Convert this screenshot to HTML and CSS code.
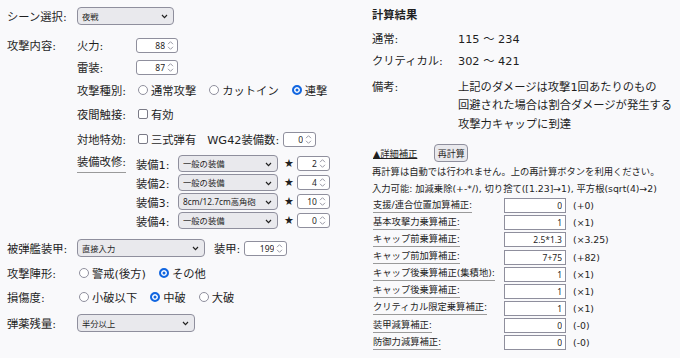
FILE: index.html
```html
<!DOCTYPE html>
<html lang="ja">
<head>
<meta charset="utf-8">
<title>ダメージ計算</title>
<link rel="stylesheet" href="styles.css">
</head>
<body>
<div class="page">
  <div class="left">
    <div class="row row-scene">
      <span class="lbl">シーン選択:</span>
      <span class="sel sel-scene"><select><option>夜戦</option></select><svg class="chev" width="7" height="5" viewBox="0 0 7 5"><path d="M1 1 L3.5 3.6 L6 1" fill="none" stroke="#222" stroke-width="1.2"/></svg></span>
    </div>

    <div class="group g-attack">
      <span class="lbl lbl-top">攻撃内容:</span>
      <div class="subs">
        <div class="srow h22">
          <span class="slbl">火力:</span>
          <span class="num n42"><input value="88"><svg class="spin" width="9" height="13" viewBox="0 0 9 13"><path d="M2 5.2 L4.5 2.7 L7 5.2 M2 7.8 L4.5 10.3 L7 7.8" fill="none" stroke="#9a9aa6" stroke-width="1"/></svg></span>
        </div>
        <div class="srow h22">
          <span class="slbl">雷装:</span>
          <span class="num n42"><input value="87"><svg class="spin" width="9" height="13" viewBox="0 0 9 13"><path d="M2 5.2 L4.5 2.7 L7 5.2 M2 7.8 L4.5 10.3 L7 7.8" fill="none" stroke="#9a9aa6" stroke-width="1"/></svg></span>
        </div>
        <div class="srow h24">
          <span class="slbl">攻撃種別:</span>
          <label class="opt"><input type="radio" name="kind">通常攻撃</label>
          <label class="opt"><input type="radio" name="kind">カットイン</label>
          <label class="opt"><input type="radio" name="kind" checked>連撃</label>
        </div>
        <div class="srow h24">
          <span class="slbl">夜間触接:</span>
          <label class="opt"><input type="checkbox">有効</label>
        </div>
        <div class="srow h26">
          <span class="slbl">対地特効:</span>
          <label class="opt"><input type="checkbox">三式弾有</label>
          <span class="wg">WG42装備数:</span>
          <span class="num n33"><input value="0"><svg class="spin" width="9" height="13" viewBox="0 0 9 13"><path d="M2 5.2 L4.5 2.7 L7 5.2 M2 7.8 L4.5 10.3 L7 7.8" fill="none" stroke="#9a9aa6" stroke-width="1"/></svg></span>
        </div>
        <div class="eq">
          <span class="slbl lbl-eq"><span class="ul">装備改修:</span></span>
          <div class="eqrows">
            <div class="erow">
              <span class="elbl">装備1:</span>
              <span class="sel sel-eq"><select><option>一般の装備</option></select><svg class="chev" width="7" height="5" viewBox="0 0 7 5"><path d="M1 1 L3.5 3.6 L6 1" fill="none" stroke="#222" stroke-width="1.2"/></svg></span>
              <span class="star">★</span>
              <span class="num n33"><input value="2"><svg class="spin" width="9" height="13" viewBox="0 0 9 13"><path d="M2 5.2 L4.5 2.7 L7 5.2 M2 7.8 L4.5 10.3 L7 7.8" fill="none" stroke="#9a9aa6" stroke-width="1"/></svg></span>
            </div>
            <div class="erow">
              <span class="elbl">装備2:</span>
              <span class="sel sel-eq"><select><option>一般の装備</option></select><svg class="chev" width="7" height="5" viewBox="0 0 7 5"><path d="M1 1 L3.5 3.6 L6 1" fill="none" stroke="#222" stroke-width="1.2"/></svg></span>
              <span class="star">★</span>
              <span class="num n33"><input value="4"><svg class="spin" width="9" height="13" viewBox="0 0 9 13"><path d="M2 5.2 L4.5 2.7 L7 5.2 M2 7.8 L4.5 10.3 L7 7.8" fill="none" stroke="#9a9aa6" stroke-width="1"/></svg></span>
            </div>
            <div class="erow">
              <span class="elbl">装備3:</span>
              <span class="sel sel-eq"><select><option>8cm/12.7cm高角砲</option></select><svg class="chev" width="7" height="5" viewBox="0 0 7 5"><path d="M1 1 L3.5 3.6 L6 1" fill="none" stroke="#222" stroke-width="1.2"/></svg></span>
              <span class="star">★</span>
              <span class="num n33"><input value="10"><svg class="spin" width="9" height="13" viewBox="0 0 9 13"><path d="M2 5.2 L4.5 2.7 L7 5.2 M2 7.8 L4.5 10.3 L7 7.8" fill="none" stroke="#9a9aa6" stroke-width="1"/></svg></span>
            </div>
            <div class="erow">
              <span class="elbl">装備4:</span>
              <span class="sel sel-eq"><select><option>一般の装備</option></select><svg class="chev" width="7" height="5" viewBox="0 0 7 5"><path d="M1 1 L3.5 3.6 L6 1" fill="none" stroke="#222" stroke-width="1.2"/></svg></span>
              <span class="star">★</span>
              <span class="num n33"><input value="0"><svg class="spin" width="9" height="13" viewBox="0 0 9 13"><path d="M2 5.2 L4.5 2.7 L7 5.2 M2 7.8 L4.5 10.3 L7 7.8" fill="none" stroke="#9a9aa6" stroke-width="1"/></svg></span>
            </div>
          </div>
        </div>
      </div>
    </div>

    <div class="row row-armor">
      <span class="lbl">被弾艦装甲:</span>
      <span class="sel sel-armor"><select><option>直接入力</option></select><svg class="chev" width="7" height="5" viewBox="0 0 7 5"><path d="M1 1 L3.5 3.6 L6 1" fill="none" stroke="#222" stroke-width="1.2"/></svg></span>
      <span class="armor-lbl">装甲:</span>
      <span class="num n43"><input value="199"><svg class="spin" width="9" height="13" viewBox="0 0 9 13"><path d="M2 5.2 L4.5 2.7 L7 5.2 M2 7.8 L4.5 10.3 L7 7.8" fill="none" stroke="#9a9aa6" stroke-width="1"/></svg></span>
    </div>
    <div class="row row-form">
      <span class="lbl">攻撃陣形:</span>
      <label class="opt"><input type="radio" name="form">警戒(後方)</label>
      <label class="opt"><input type="radio" name="form" checked>その他</label>
    </div>
    <div class="row">
      <span class="lbl">損傷度:</span>
      <label class="opt"><input type="radio" name="dmg">小破以下</label>
      <label class="opt"><input type="radio" name="dmg" checked>中破</label>
      <label class="opt"><input type="radio" name="dmg">大破</label>
    </div>
    <div class="row row-ammo">
      <span class="lbl">弾薬残量:</span>
      <span class="sel sel-ammo"><select><option>半分以上</option></select><svg class="chev" width="7" height="5" viewBox="0 0 7 5"><path d="M1 1 L3.5 3.6 L6 1" fill="none" stroke="#222" stroke-width="1.2"/></svg></span>
    </div>
  </div>

  <div class="right">
    <div class="title">計算結果</div>
    <div class="res res1"><span class="k">通常:</span><span>115 ～ 234</span></div>
    <div class="res res2"><span class="k">クリティカル:</span><span>302 ～ 421</span></div>
    <div class="res res3"><span class="k">備考:</span><span>上記のダメージは攻撃1回あたりのもの<br>回避された場合は割合ダメージが発生する<br>攻撃力キャップに到達</span></div>

    <div class="detail"><span class="toggle">▲詳細補正</span><button class="btn">再計算</button></div>
    <div class="notes">再計算は自動では行われません。上の再計算ボタンを利用ください。<br>入力可能: 加減乗除(+-*/), 切り捨て([1.23]→1), 平方根(sqrt(4)→2)</div>

    <div class="crow"><span class="clbl"><span>支援/連合位置加算補正:</span></span><input class="cin" value="0"><span class="cval">(+0)</span></div>
    <div class="crow"><span class="clbl"><span>基本攻撃力乗算補正:</span></span><input class="cin" value="1"><span class="cval">(×1)</span></div>
    <div class="crow"><span class="clbl"><span>キャップ前乗算補正:</span></span><input class="cin" value="2.5*1.3"><span class="cval">(×3.25)</span></div>
    <div class="crow"><span class="clbl"><span>キャップ前加算補正:</span></span><input class="cin" value="7+75"><span class="cval">(+82)</span></div>
    <div class="crow"><span class="clbl"><span>キャップ後乗算補正(集積地):</span></span><input class="cin" value="1"><span class="cval">(×1)</span></div>
    <div class="crow"><span class="clbl"><span>キャップ後乗算補正:</span></span><input class="cin" value="1"><span class="cval">(×1)</span></div>
    <div class="crow"><span class="clbl"><span>クリティカル限定乗算補正:</span></span><input class="cin" value="1"><span class="cval">(×1)</span></div>
    <div class="crow"><span class="clbl"><span>装甲減算補正:</span></span><input class="cin" value="0"><span class="cval">(-0)</span></div>
    <div class="crow"><span class="clbl"><span>防御力減算補正:</span></span><input class="cin" value="0"><span class="cval">(-0)</span></div>
  </div>
</div>
</body>
</html>
```

FILE: styles.css
```css
* { box-sizing: border-box; }
html, body { margin: 0; padding: 0; }
body {
  background: #f9f9fb;
  color: #1f1f1f;
  font-family: "DejaVu Sans", "Noto Sans CJK JP", sans-serif;
  font-size: 11.3px;
  width: 680px;
  height: 358px;
  overflow: hidden;
}
.page { display: flex; }
.left { width: 372px; flex: none; padding: 4px 0 0 7px; }
.right { flex: 1; padding-top: 7px; }

.row { display: flex; align-items: center; height: 24px; }
.lbl { width: 70px; flex: none; }
.row-armor { margin-top: 6px; }
.row-form { margin-top: 1px; }
.row-ammo { margin-top: 2px; }

.g-attack { display: flex; margin-top: 6px; }
.lbl-top { height: 22px; display: flex; align-items: center; align-self: flex-start; }
.subs { display: flex; flex-direction: column; }
.srow { display: flex; align-items: center; }
.h22 { height: 22px; }
.h24 { height: 24px; }
.h26 { height: 26px; }
.slbl { width: 59px; flex: none; }

.eq { display: flex; margin-top: 2px; }
.lbl-eq { height: 19px; display: flex; align-items: center; align-self: flex-start; }
.ul { display: inline-block; line-height: 15px; padding-bottom: 2px; border-bottom: 1px solid #9a9a9a; }
.eqrows { display: flex; flex-direction: column; }
.erow { display: flex; align-items: center; height: 19px; }
.elbl { width: 42px; flex: none; }
.star { margin: 0 3px 0 6px; font-size: 11px; line-height: 1; }

.wg { margin-right: 4px; }
.armor-lbl { margin: 0 4px 0 9px; }

/* selects */
.sel { position: relative; display: inline-flex; flex: none; }
.sel select {
  appearance: none;
  -webkit-appearance: none;
  width: 100%;
  height: 100%;
  margin: 0;
  padding: 0 14px 0 4px;
  border: 1px solid #8f8f9d;
  border-radius: 4px;
  background: #e9e9ed;
  color: #1f1f1f;
  font: 8.3px "Noto Sans", "Noto Sans CJK JP", sans-serif;
}
.sel .chev { position: absolute; right: 6px; top: 50%; margin-top: -2px; pointer-events: none; }
.sel-scene { width: 97px; height: 18px; }
.sel-eq { width: 100px; height: 17px; }
.sel-armor { width: 128px; height: 18px; }
.sel-ammo { width: 118px; height: 18px; }

/* number inputs */
.num {
  display: inline-flex;
  align-items: center;
  flex: none;
  height: 15px;
  background: #fff;
  border: 1px solid #8f8f9d;
  border-radius: 3px;
  overflow: hidden;
}
.num input {
  flex: 1;
  min-width: 0;
  height: 100%;
  margin: 0;
  padding: 0 1px 0 0;
  border: 0;
  background: transparent;
  text-align: right;
  color: #1f1f1f;
  font: 8.5px "Noto Sans", "Noto Sans CJK JP", sans-serif;
  outline: none;
}
.spin { flex: none; margin-right: 2px; }
.n42 { width: 42px; }
.n33 { width: 33px; }
.n43 { width: 43px; }

/* radios / checkboxes */
.opt { display: inline-flex; align-items: center; margin-right: 11px; }
.opt input {
  appearance: none;
  -webkit-appearance: none;
  flex: none;
  width: 10px;
  height: 10px;
  margin: 0 3px 0 2px;
  border: 1px solid #8f8f9d;
  background: #fff;
}
.opt input[type=radio] { border-radius: 50%; }
.opt input[type=radio]:checked {
  border: 2px solid #1266e0;
  background: #1266e0;
  box-shadow: inset 0 0 0 1.5px #fff;
}
.opt input[type=checkbox] { border-radius: 2px; border-color: #7a7a86; }

/* right column */
.title { font-weight: bold; height: 18px; line-height: 18px; }
.res { display: flex; line-height: 18.4px; }
.res .k { width: 86px; flex: none; }
.res1 { margin-top: 6px; }
.res2 { margin-top: 4px; }
.res3 { margin-top: 7px; }

.detail { display: flex; align-items: center; height: 18px; margin-top: 10px; padding-left: 1px; font-size: 9.3px; }
.toggle { text-decoration: underline; margin-right: 17px; }
.btn {
  width: 34px;
  height: 18px;
  padding: 0;
  border: 1px solid #8f8f9d;
  border-radius: 4px;
  background: #e9e9ed;
  color: #1f1f1f;
  font: 9px "Noto Sans CJK JP", sans-serif;
}
.notes { margin-top: 2px; font-size: 9.3px; line-height: 16.5px; }

.crow { display: flex; align-items: center; height: 17.15px; padding-left: 1px; font-size: 9.3px; }
.clbl { width: 131px; flex: none; }
.clbl span { display: inline-block; line-height: 12px; padding-bottom: 1px; border-bottom: 1px solid #9a9a9a; }
.cin {
  width: 62px;
  height: 15px;
  margin: 0;
  padding: 0 3px;
  border: 1px solid #8f8f9d;
  background: #fff;
  text-align: right;
  color: #1f1f1f;
  font: 8.5px "Noto Sans", "Noto Sans CJK JP", sans-serif;
}
.cval { margin-left: 7px; }
```
